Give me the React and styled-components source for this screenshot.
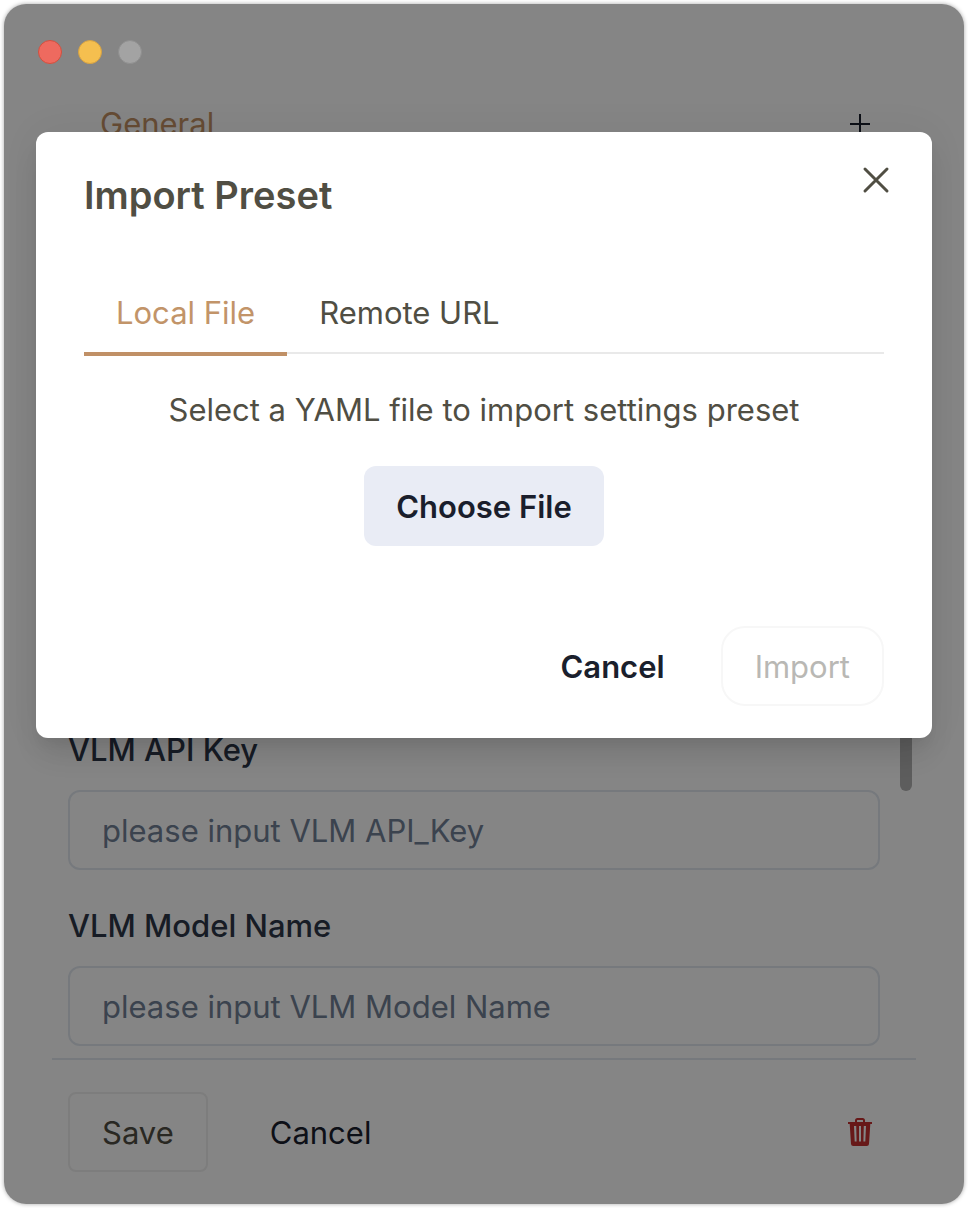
import React from 'react';
import styled, { createGlobalStyle } from 'styled-components';

const GlobalStyle = createGlobalStyle`
  *, *::before, *::after { box-sizing: border-box; }
  body {
    margin: 0;
    background: #fff;
    color: #1a202c;
    font-family: Inter, "Liberation Sans", sans-serif;
    font-size: 31px;
    line-height: 48px;
  }
  button, input { font: inherit; color: inherit; margin: 0; }
  button { padding: 0; border: 0; background: none; cursor: pointer; white-space: nowrap; }
  h2, p { margin: 0; }
`;

const Page = styled.div`
  min-height: 100vh;
  padding: 4px;
  display: flex;
`;

const Window = styled.div`
  position: relative;
  flex: 1;
  display: flex;
  flex-direction: column;
  border-radius: 22px;
  overflow: hidden;
  box-shadow: 0 0 4px rgba(0, 0, 0, 0.35);
`;

const TitleBar = styled.header`
  display: flex;
  gap: 16px;
  padding: 36px 34px;
`;

const LightButton = styled.button`
  position: relative;
  z-index: 2;
  width: 24px;
  height: 24px;
  border-radius: 50%;
  border: 1px solid ${(p) => p.$edge};
  background: ${(p) => p.$fill};
`;

const TabBar = styled.div`
  display: flex;
  justify-content: space-between;
  align-items: center;
  padding: 0 80px 0 96px;
`;

const SectionTab = styled.button`
  color: #c29165;
`;

const IconButton = styled.button`
  display: flex;
  align-items: center;
  justify-content: center;
  width: 48px;
  height: 48px;
  color: ${(p) => p.$color};
`;

const Fields = styled.form`
  position: relative;
  flex: 1;
  display: flex;
  flex-direction: column;
  justify-content: flex-end;
  gap: 32px;
  padding: 0 84px 12px 64px;
`;

const FieldGroup = styled.div`
  display: flex;
  flex-direction: column;
  gap: 16px;
`;

const Label = styled.label`
  color: #2d3748;
  font-weight: 500;
`;

const TextInput = styled.input`
  width: 100%;
  height: 80px;
  padding: 0 32px;
  border: 2px solid #e2e8f0;
  border-radius: 12px;
  background: transparent;
  &::placeholder { color: #718096; opacity: 1; }
`;

const ScrollThumb = styled.div`
  position: absolute;
  right: 52px;
  bottom: 267px;
  width: 12px;
  height: 160px;
  border-radius: 6px;
  background: #b2b2b2;
`;

const ActionBar = styled.footer`
  display: flex;
  align-items: center;
  margin: 0 48px;
  padding: 32px 32px 32px 16px;
  border-top: 2px solid #e2e8f0;
`;

const TextButton = styled.button`
  height: 80px;
  padding: 2px 32px 0;
`;

const SaveButton = styled(TextButton)`
  border: 2px solid #efefef;
  border-radius: 8px;
  color: #504e43;
`;

const PlainButton = styled(TextButton)`
  margin-left: 30px;
`;

const TrailingIcon = styled(IconButton)`
  margin-left: auto;
`;

const Overlay = styled.div`
  position: absolute;
  inset: 0;
  padding: 128px 32px 0;
  background: rgba(0, 0, 0, 0.48);
`;

const Dialog = styled.section`
  position: relative;
  padding: 32px 48px;
  border-radius: 12px;
  background: #fff;
  color: #504e43;
  box-shadow: 0 20px 30px -6px rgba(0, 0, 0, 0.1), 0 8px 12px -4px rgba(0, 0, 0, 0.05),
    0 0 40px rgba(0, 0, 0, 0.05);
`;

const CloseButton = styled(IconButton)`
  position: absolute;
  top: 24px;
  right: 32px;
`;

const DialogTitle = styled.h2`
  font-size: 38px;
  line-height: 62px;
  font-weight: 600;
`;

const Tabs = styled.div`
  display: flex;
  margin-top: 46px;
  border-bottom: 2px solid #e9e9e9;
`;

const Tab = styled.button`
  height: 84px;
  margin-bottom: -4px;
  padding: 2px 32px 0;
  border-bottom: 4px solid ${(p) => (p.$active ? '#c09066' : 'transparent')};
  color: ${(p) => (p.$active ? '#c29469' : '#504e43')};
`;

const TabPanel = styled.div`
  display: flex;
  flex-direction: column;
  align-items: center;
  gap: 32px;
  padding: 32px 0;
  text-align: center;
`;

const ChooseButton = styled(TextButton)`
  border-radius: 12px;
  background: #e9ecf5;
  color: #1a1e2c;
  font-weight: 600;
`;

const DialogFooter = styled.div`
  display: flex;
  justify-content: flex-end;
  gap: 24px;
  padding-top: 48px;
`;

const CancelButton = styled(TextButton)`
  color: #1a202c;
  font-weight: 600;
`;

const ImportButton = styled(TextButton)`
  border: 2px solid #f7f7f7;
  border-radius: 24px;
  color: #b9b8b4;
`;

function TrashIcon() {
  return (
    <svg width="24" height="28" viewBox="0 0 24 28" fill="none">
      <path d="M8 5V2.500Q8 1 9.500 1H14.500Q16 1 16 2.500V5" stroke="currentColor" strokeWidth="2" />
      <path d="M0 4H24V6H22.300L21 26Q20.800 28 18.800 28H5.200Q3.200 28 3 26L1.700 6H0ZM6 8L6.700 23.500H8.600L8.200 8ZM11 8V23.500H13V8ZM15.800 8L15.400 23.500H17.300L18 8Z" fill="currentColor" fillRule="evenodd" />
    </svg>
  );
}

function Field({ id, label, placeholder }) {
  return (
    <FieldGroup>
      <Label htmlFor={id}>{label}</Label>
      <TextInput id={id} type="text" placeholder={placeholder} />
    </FieldGroup>
  );
}

export default function App() {
  return (
    <>
      <GlobalStyle />
      <Page>
        <Window>
          <TitleBar>
            <LightButton aria-label="Close window" $fill="#ee6a5f" $edge="#d1503f" />
            <LightButton aria-label="Minimize window" $fill="#f5bf4f" $edge="#d6a243" />
            <LightButton aria-label="Zoom window" $fill="#a3a3a3" $edge="#8f8f8f" />
          </TitleBar>
          <TabBar>
            <SectionTab>General</SectionTab>
            <IconButton aria-label="Add" $color="#1a202c">
              <svg width="20" height="20" viewBox="0 0 20 20" stroke="currentColor" strokeWidth="2">
                <path d="M10 0v20M0 10h20" />
              </svg>
            </IconButton>
          </TabBar>
          <Fields>
            <Field id="api-key" label="VLM API Key" placeholder="please input VLM API_Key" />
            <Field id="model-name" label="VLM Model Name" placeholder="please input VLM Model Name" />
            <ScrollThumb />
          </Fields>
          <ActionBar>
            <SaveButton>Save</SaveButton>
            <PlainButton>Cancel</PlainButton>
            <TrailingIcon aria-label="Delete" $color="#c53030">
              <TrashIcon />
            </TrailingIcon>
          </ActionBar>
          <Overlay>
            <Dialog role="dialog" aria-modal="true" aria-labelledby="dialog-title">
              <DialogTitle id="dialog-title">Import Preset</DialogTitle>
              <CloseButton aria-label="Close" $color="#504e43">
                <svg width="24" height="24" viewBox="0 0 24 24" overflow="visible" stroke="currentColor" strokeWidth="3" strokeLinecap="round">
                  <path d="M1 1l22 22M23 1L1 23" />
                </svg>
              </CloseButton>
              <Tabs role="tablist">
                <Tab role="tab" aria-selected="true" $active>Local File</Tab>
                <Tab role="tab" aria-selected="false">Remote URL</Tab>
              </Tabs>
              <TabPanel role="tabpanel">
                <p>Select a YAML file to import settings preset</p>
                <ChooseButton>Choose File</ChooseButton>
              </TabPanel>
              <DialogFooter>
                <CancelButton>Cancel</CancelButton>
                <ImportButton disabled>Import</ImportButton>
              </DialogFooter>
            </Dialog>
          </Overlay>
        </Window>
      </Page>
    </>
  );
}
